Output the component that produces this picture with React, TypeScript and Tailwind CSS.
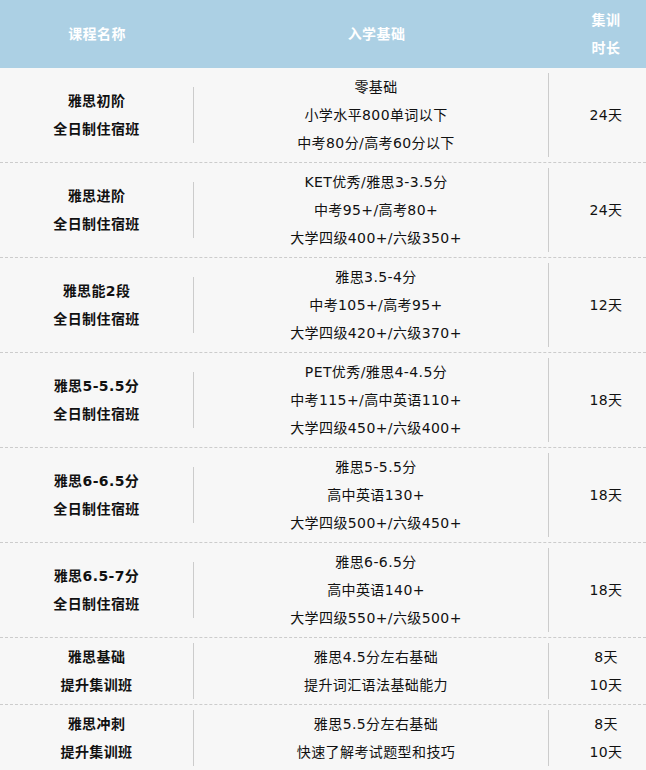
const rows = [
  { name: ["雅思初阶", "全日制住宿班"], req: ["零基础", "小学水平800单词以下", "中考80分/高考60分以下"], days: ["24天"] },
  { name: ["雅思进阶", "全日制住宿班"], req: ["KET优秀/雅思3-3.5分", "中考95+/高考80+", "大学四级400+/六级350+"], days: ["24天"] },
  { name: ["雅思能2段", "全日制住宿班"], req: ["雅思3.5-4分", "中考105+/高考95+", "大学四级420+/六级370+"], days: ["12天"] },
  { name: ["雅思5-5.5分", "全日制住宿班"], req: ["PET优秀/雅思4-4.5分", "中考115+/高中英语110+", "大学四级450+/六级400+"], days: ["18天"] },
  { name: ["雅思6-6.5分", "全日制住宿班"], req: ["雅思5-5.5分", "高中英语130+", "大学四级500+/六级450+"], days: ["18天"] },
  { name: ["雅思6.5-7分", "全日制住宿班"], req: ["雅思6-6.5分", "高中英语140+", "大学四级550+/六级500+"], days: ["18天"] },
  { name: ["雅思基础", "提升集训班"], req: ["雅思4.5分左右基础", "提升词汇语法基础能力"], days: ["8天", "10天"] },
  { name: ["雅思冲刺", "提升集训班"], req: ["雅思5.5分左右基础", "快速了解考试题型和技巧"], days: ["8天", "10天"] },
];

export default function App() {
  return (
    <div className="w-[646px] h-[770px] overflow-hidden bg-[#f7f7f7] font-['DejaVu_Sans','Noto_Sans_CJK_SC',sans-serif] text-[14px] leading-[28px] tracking-[0.4px] text-[#111]">
      <div className="flex h-[68px] items-center bg-[#acd0e4] font-bold text-white">
        <div className="w-[194px] text-center">课程名称</div>
        <div className="w-[355px] pl-[10px] text-center">入学基础</div>
        <div className="flex-1 pl-[17px] text-center">
          <div>集训</div>
          <div>时长</div>
        </div>
      </div>
      {rows.map((r, i) => (
        <div
          key={i}
          className={
            i === rows.length - 1
              ? "flex py-[5px]"
              : "flex py-[5px] border-b border-dashed border-[#cccccc]"
          }
        >
          <div className="flex w-[194px] items-center">
            <div className="w-full border-r border-[#cccccc] text-center font-bold">
              {r.name.map((t) => (
                <div key={t}>{t}</div>
              ))}
            </div>
          </div>
          <div className="flex w-[355px] flex-col justify-center border-r border-[#cccccc] pl-[10px] text-center">
            {r.req.map((t) => (
              <div key={t}>{t}</div>
            ))}
          </div>
          <div className="flex flex-1 flex-col justify-center pl-[17px] text-center">
            {r.days.map((t) => (
              <div key={t}>{t}</div>
            ))}
          </div>
        </div>
      ))}
    </div>
  );
}
